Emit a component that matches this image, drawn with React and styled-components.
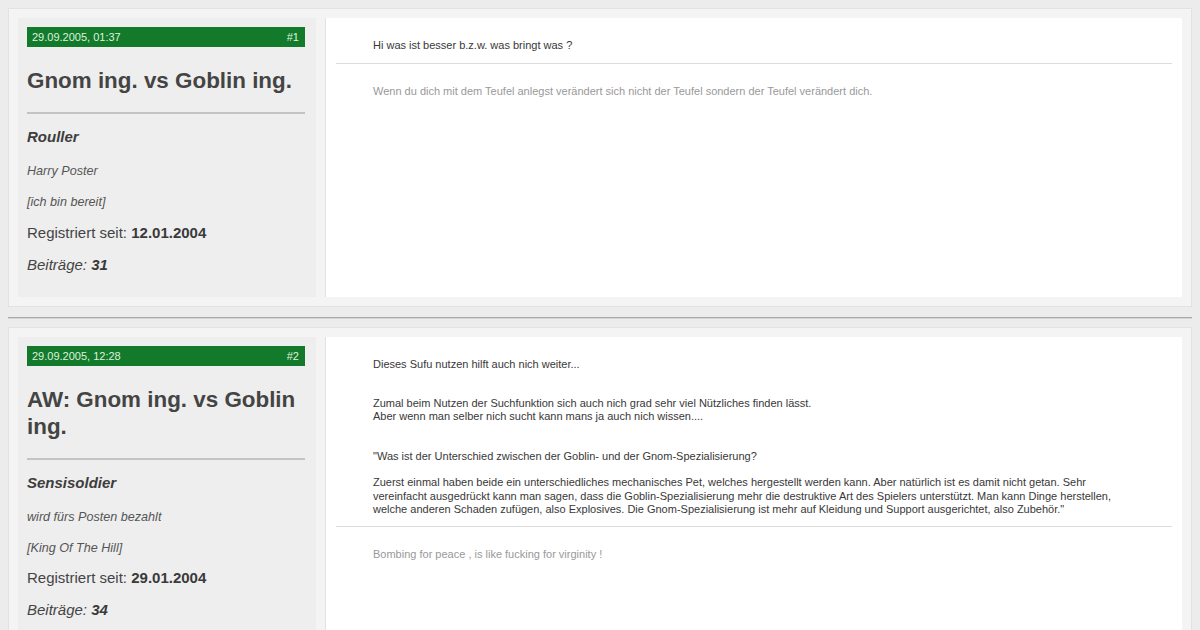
import React from "react"
import styled, { createGlobalStyle } from "styled-components"

const GlobalStyle = createGlobalStyle`
	body {
		margin: 8px;
		background: #ececec;
		font-family: "Liberation Sans", Arial, sans-serif;
		color: #444;
	}
`

const Post = styled.div`
	display: grid;
	grid-template-columns: 298px 1fr;
	column-gap: 9px;
	padding: 9px;
	background: #f4f4f4;
	border: 1px solid #e2e2e2;
`

const Divider = styled.hr`
	height: 0;
	margin: 10px 0 8px;
	border: 0;
	border-top: 1px solid #a9a9a9;
	border-bottom: 1px solid #d6d6d6;
`

const Sidebar = styled.div`
	background: #eeeeee;
	padding: 9px 11px 9px 9px;
`

const DateBar = styled.div`
	display: flex;
	justify-content: space-between;
	align-items: center;
	height: 20px;
	padding: 0 6px 0 5px;
	background: #137a2c;
	color: #def2dc;
	font-size: 11px;
`

const Title = styled.h2`
	margin: 20px 0 18px;
	font-size: 22.4px;
	line-height: 27px;
	font-weight: bold;
	color: #444;
`

const Rule = styled.div`
	height: 2px;
	background: #c4c4c4;
`

const Name = styled.div`
	margin-top: 14px;
	font-size: 15px;
	line-height: 18px;
	font-weight: bold;
	font-style: italic;
	color: #3d3d3d;
`

const Small = styled.div`
	margin-top: ${(p) => (p.first ? "18px" : "16px")};
	font-size: 12.6px;
	line-height: 15px;
	font-style: italic;
	color: #555;
`

const Stat = styled.div`
	margin-top: ${(p) => (p.first ? "13.5px" : "14px")};
	margin-bottom: ${(p) => (p.last ? "14px" : "0")};
	font-size: 15px;
	line-height: 18px;
	font-style: ${(p) => (p.italic ? "italic" : "normal")};
	color: #444;

	b {
		color: #3a3a3a;
	}
`

const Content = styled.div`
	background: #fff;
	border-left: 1px solid #e2e2e2;
	padding: 10px;
`

const Message = styled.div`
	padding: 11px 37px 10.5px;
	font-size: 11px;
	line-height: 13.2px;
	color: #383838;
`

const Separator = styled.div`
	height: 1px;
	background: #dcdcdc;
`

const Signature = styled.div`
	padding: 21px 37px 20px;
	font-size: 11px;
	line-height: 13.2px;
	color: #999;
`

const posts = [
	{
		date: "29.09.2005, 01:37",
		no: "#1",
		title: "Gnom ing. vs Goblin ing.",
		user: "Rouller",
		rank: "Harry Poster",
		tag: "[ich bin bereit]",
		since: "12.01.2004",
		count: "31",
		body: <>Hi was ist besser b.z.w. was bringt was ?</>,
		sig: "Wenn du dich mit dem Teufel anlegst verändert sich nicht der Teufel sondern der Teufel verändert dich.",
	},
	{
		date: "29.09.2005, 12:28",
		no: "#2",
		title: "AW: Gnom ing. vs Goblin ing.",
		user: "Sensisoldier",
		rank: "wird fürs Posten bezahlt",
		tag: "[King Of The Hill]",
		since: "29.01.2004",
		count: "34",
		body: (
			<>
				Dieses Sufu nutzen hilft auch nich weiter...
				<br />
				<br />
				<br />
				Zumal beim Nutzen der Suchfunktion sich auch nich grad sehr viel Nützliches finden lässt.
				<br />
				Aber wenn man selber nich sucht kann mans ja auch nich wissen....
				<br />
				<br />
				<br />
				"Was ist der Unterschied zwischen der Goblin- und der Gnom-Spezialisierung?
				<br />
				<br />
				Zuerst einmal haben beide ein unterschiedliches mechanisches Pet, welches hergestellt werden kann. Aber natürlich ist es damit nicht getan. Sehr vereinfacht ausgedrückt kann man sagen, dass die Goblin-Spezialisierung mehr die destruktive Art des Spielers unterstützt. Man kann Dinge herstellen, welche anderen Schaden zufügen, also Explosives. Die Gnom-Spezialisierung ist mehr auf Kleidung und Support ausgerichtet, also Zubehör."
			</>
		),
		sig: "Bombing for peace , is like fucking for virginity !",
	},
]

const PostCard = ({ post }) => (
	<Post>
		<Sidebar>
			<DateBar>
				<span>{post.date}</span>
				<span>{post.no}</span>
			</DateBar>
			<Title>{post.title}</Title>
			<Rule />
			<Name>{post.user}</Name>
			<Small first>{post.rank}</Small>
			<Small>{post.tag}</Small>
			<Stat first>
				Registriert seit: <b>{post.since}</b>
			</Stat>
			<Stat italic last>
				Beiträge: <b>{post.count}</b>
			</Stat>
		</Sidebar>
		<Content>
			<Message>{post.body}</Message>
			<Separator />
			<Signature>{post.sig}</Signature>
		</Content>
	</Post>
)

const App = () => (
	<>
		<GlobalStyle />
		<PostCard post={posts[0]} />
		<Divider />
		<PostCard post={posts[1]} />
	</>
)

export default App
